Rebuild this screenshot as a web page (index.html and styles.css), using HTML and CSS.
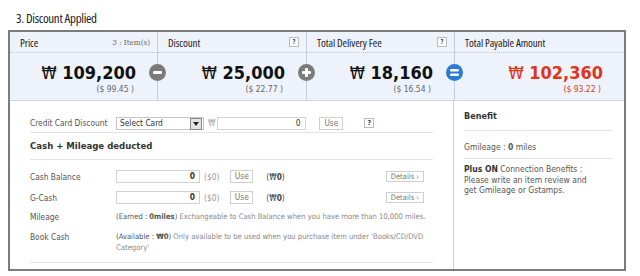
FILE: index.html
```html
<!DOCTYPE html>
<html lang="en">
<head>
  <meta charset="UTF-8" />
  <title>Discount Applied</title>
  <link rel="stylesheet" href="styles.css">
</head>
<body>
  <h3 class="section-title">3. Discount Applied</h3>
  <div class="order-box">
    <div class="summary">
      <div class="sum-col">
        <div class="sum-head"><span>Price</span><span class="items">3 : Item(s)</span></div>
        <div class="sum-amount">
          <div class="won"><span class="sign">₩</span> 109,200</div>
          <div class="usd">($ 99.45 )</div>
        </div>
        <span class="op">
          <svg width="17" height="17" viewBox="0 0 17 17"><circle cx="8.5" cy="8.5" r="8.5" fill="#7b7b7b"/><rect x="4" y="7" width="9" height="3" rx="1" fill="#fff"/></svg>
        </span>
      </div>
      <div class="sum-col">
        <div class="sum-head"><span>Discount</span><span class="qmark">?</span></div>
        <div class="sum-amount">
          <div class="won"><span class="sign">₩</span> 25,000</div>
          <div class="usd">($ 22.77 )</div>
        </div>
        <span class="op">
          <svg width="17" height="17" viewBox="0 0 17 17"><circle cx="8.5" cy="8.5" r="8.5" fill="#7b7b7b"/><rect x="4" y="7" width="9" height="3" rx="1" fill="#fff"/><rect x="7" y="4" width="3" height="9" rx="1" fill="#fff"/></svg>
        </span>
      </div>
      <div class="sum-col">
        <div class="sum-head"><span>Total Delivery Fee</span><span class="qmark">?</span></div>
        <div class="sum-amount">
          <div class="won"><span class="sign">₩</span> 18,160</div>
          <div class="usd">($ 16.54 )</div>
        </div>
        <span class="op">
          <svg width="17" height="17" viewBox="0 0 17 17"><circle cx="8.5" cy="8.5" r="8.5" fill="#2b7bd4"/><rect x="4" y="5" width="9" height="2.6" rx="1" fill="#fff"/><rect x="4" y="9.4" width="9" height="2.6" rx="1" fill="#fff"/></svg>
        </span>
      </div>
      <div class="sum-col total">
        <div class="sum-head"><span>Total Payable Amount</span></div>
        <div class="sum-amount">
          <div class="won"><span class="sign">₩</span> 102,360</div>
          <div class="usd">($ 93.22 )</div>
        </div>
      </div>
    </div>

    <div class="detail">
      <div class="pay-left">
        <div class="pay-row card-row">
          <span class="label">Credit Card Discount</span>
          <span class="select-box"><span class="select-text">Select Card</span><span class="select-arrow"></span></span>
          <span class="won-mark">₩</span>
          <span class="field wide">0</span>
          <span class="btn use-btn">Use</span>
          <span class="qmark">?</span>
        </div>
        <div class="group-title">Cash + Mileage deducted</div>
        <div class="cash-list">
          <div class="pay-row cash-row">
            <span class="label">Cash Balance</span>
            <span class="field"><b>0</b></span>
            <span class="usd-small">($0)</span>
            <span class="btn">Use</span>
            <span class="won-small">(₩<b>0</b>)</span>
            <span class="btn details">Details ›</span>
          </div>
          <div class="pay-row cash-row">
            <span class="label">G-Cash</span>
            <span class="field"><b>0</b></span>
            <span class="usd-small">($0)</span>
            <span class="btn">Use</span>
            <span class="won-small">(₩<b>0</b>)</span>
            <span class="btn details">Details ›</span>
          </div>
          <div class="pay-row mileage-row">
            <span class="label">Mileage</span>
            <p class="note"><span class="dark">(Earned : <b>0miles</b>)</span> Exchangeable to Cash Balance when you have more than 10,000 miles.</p>
          </div>
          <div class="pay-row book-row">
            <span class="label">Book Cash</span>
            <p class="note"><span class="dark">(Available : <b>₩0</b>)</span> Only available to be used when you purchase item under 'Books/CD/DVD<br>Category'</p>
          </div>
        </div>
      </div>
      <div class="benefit">
        <div class="benefit-title">Benefit</div>
        <div class="benefit-line">Gmileage : <b>0</b> miles</div>
        <p class="benefit-note"><b>Plus ON</b> Connection Benefits :<br>Please write an item review and<br>get Gmileage or Gstamps.</p>
      </div>
    </div>
  </div>
</body>
</html>
```

FILE: styles.css
```css
body {
  margin: 8px;
  background: #fff;
  font-family: "DejaVu Sans Condensed", "DejaVu Sans", sans-serif;
  font-stretch: condensed;
  color: #555;
}

.section-title {
  margin: 3px 0 5px 8px;
  font-family: "Open Sans", sans-serif;
  font-size: 13px;
  font-weight: normal;
  letter-spacing: -0.3px;
  line-height: 14px;
  color: #1a1a1a;
}

.order-box {
  width: 614px;
  border: 2px solid #7c7c7c;
}

/* summary bar */
.summary {
  display: grid;
  grid-template-columns: 148px 149px 148px 1fr;
  background: #eef3fb;
  border-bottom: 1px solid #cfd5df;
}

.sum-col {
  position: relative;
  border-right: 1px solid #c9cfda;
}

.sum-col.total {
  border-right: none;
}

.sum-head {
  display: flex;
  justify-content: space-between;
  align-items: center;
  height: 20px;
  padding: 0 7px 0 10px;
  border-bottom: 1px dotted #bfc6d4;
  font-family: "Open Sans", sans-serif;
  font-size: 11px;
  letter-spacing: -0.1px;
  color: #222;
}

.sum-head .items {
  font-family: "DejaVu Serif", serif;
  font-size: 8px;
  letter-spacing: 0;
  color: #666;
}

.sum-amount {
  height: 47px;
  padding: 9px 21px 0 0;
  box-sizing: border-box;
  text-align: right;
}

.won {
  font-family: "DejaVu Sans", sans-serif;
  font-stretch: condensed;
  font-size: 18px;
  font-weight: bold;
  line-height: 22px;
  color: #111;
}

.won .sign {
  font-weight: normal;
  font-size: 17px;
}

.usd {
  font-size: 8.5px;
  line-height: 11px;
  padding-right: 2px;
  color: #666;
}

.total .won,
.total .usd {
  color: #e0351b;
}

.op {
  position: absolute;
  right: -9px;
  top: 32px;
  width: 17px;
  height: 17px;
  z-index: 1;
}

.op svg {
  display: block;
}

.qmark {
  display: inline-block;
  width: 8px;
  height: 8px;
  border: 1px solid #bbb;
  background: #fff;
  font-size: 7px;
  line-height: 8px;
  text-align: center;
  color: #444;
  font-weight: bold;
}

/* detail area */
.detail {
  display: grid;
  grid-template-columns: 444px 1fr;
  height: 168px;
}

.pay-left {
  padding: 14px 20px 0 20px;
  border-right: 1px solid #c9cfda;
}

.pay-row {
  display: flex;
  align-items: center;
  font-size: 8.3px;
}

.label {
  width: 86px;
  flex: none;
  color: #555;
}

.card-row {
  height: 16px;
  padding-bottom: 1px;
  border-bottom: 1px solid #e4e4e4;
}

.select-box {
  display: flex;
  width: 88px;
  height: 13px;
  border: 1px solid #c5c5c5;
  box-sizing: border-box;
  background: #fff;
}

.select-text {
  flex: 1;
  padding-left: 3px;
  line-height: 11px;
  color: #333;
}

.select-arrow {
  position: relative;
  width: 10px;
  height: 10px;
  margin-right: 1px;
  border: 1px solid #8a8a8a;
  background: #e4e4e4;
}

.select-arrow::after {
  content: "";
  position: absolute;
  left: 2px;
  top: 3px;
  border-left: 3px solid transparent;
  border-right: 3px solid transparent;
  border-top: 4px solid #222;
}

.won-mark {
  margin: 0 2px 0 4px;
  color: #aaa;
}

.field {
  height: 13px;
  width: 84px;
  border: 1px solid #d2d2d2;
  box-sizing: border-box;
  padding-right: 4px;
  text-align: right;
  line-height: 11px;
  color: #333;
  background: #fff;
}

.field.wide {
  width: 89px;
  padding-right: 5px;
}

.btn {
  display: inline-block;
  height: 13px;
  padding: 0 4px;
  border: 1px solid #cfcfcf;
  box-sizing: border-box;
  line-height: 11px;
  color: #777;
  background: #fff;
}

.use-btn {
  width: 24px;
  margin: 0 21px 0 13px;
  text-align: center;
}

.group-title {
  height: 26px;
  line-height: 26px;
  border-bottom: 1px solid #e4e4e4;
  font-size: 9.5px;
  font-weight: bold;
  color: #333;
}

.cash-list {
  padding-top: 6px;
}

.cash-row {
  height: 21px;
}

.usd-small {
  margin-left: 4px;
  color: #999;
}

.cash-row .btn {
  width: 23px;
  margin-left: 11px;
  padding: 0;
  text-align: center;
}

.won-small {
  margin-left: 13px;
  color: #444;
}

.cash-row .btn.details {
  width: auto;
  height: 11px;
  margin: 0 9px 0 auto;
  padding: 0 4px;
  line-height: 9px;
  font-size: 7.5px;
}

.note {
  flex: 1;
  margin: 0;
  font-size: 7.6px;
  line-height: 10.5px;
  color: #888;
}

.note .dark {
  color: #555;
}

.mileage-row {
  height: 18px;
}

.mileage-row .note {
  white-space: nowrap;
}

.book-row {
  align-items: flex-start;
  padding: 6px 0 9px;
  border-bottom: 1px solid #e4e4e4;
}

.book-row .label {
  line-height: 10.5px;
}

.benefit {
  padding: 10px 11px 0 10px;
  font-size: 8.5px;
  color: #555;
}

.benefit-title {
  height: 19px;
  border-bottom: 1px solid #e4e4e4;
  font-size: 9px;
  font-weight: bold;
  color: #333;
}

.benefit-line {
  height: 27px;
  line-height: 33px;
  border-bottom: 1px solid #e4e4e4;
}

.benefit-note {
  margin: 5px 0 0;
  line-height: 10.5px;
}

.benefit-note b {
  color: #333;
}
```
